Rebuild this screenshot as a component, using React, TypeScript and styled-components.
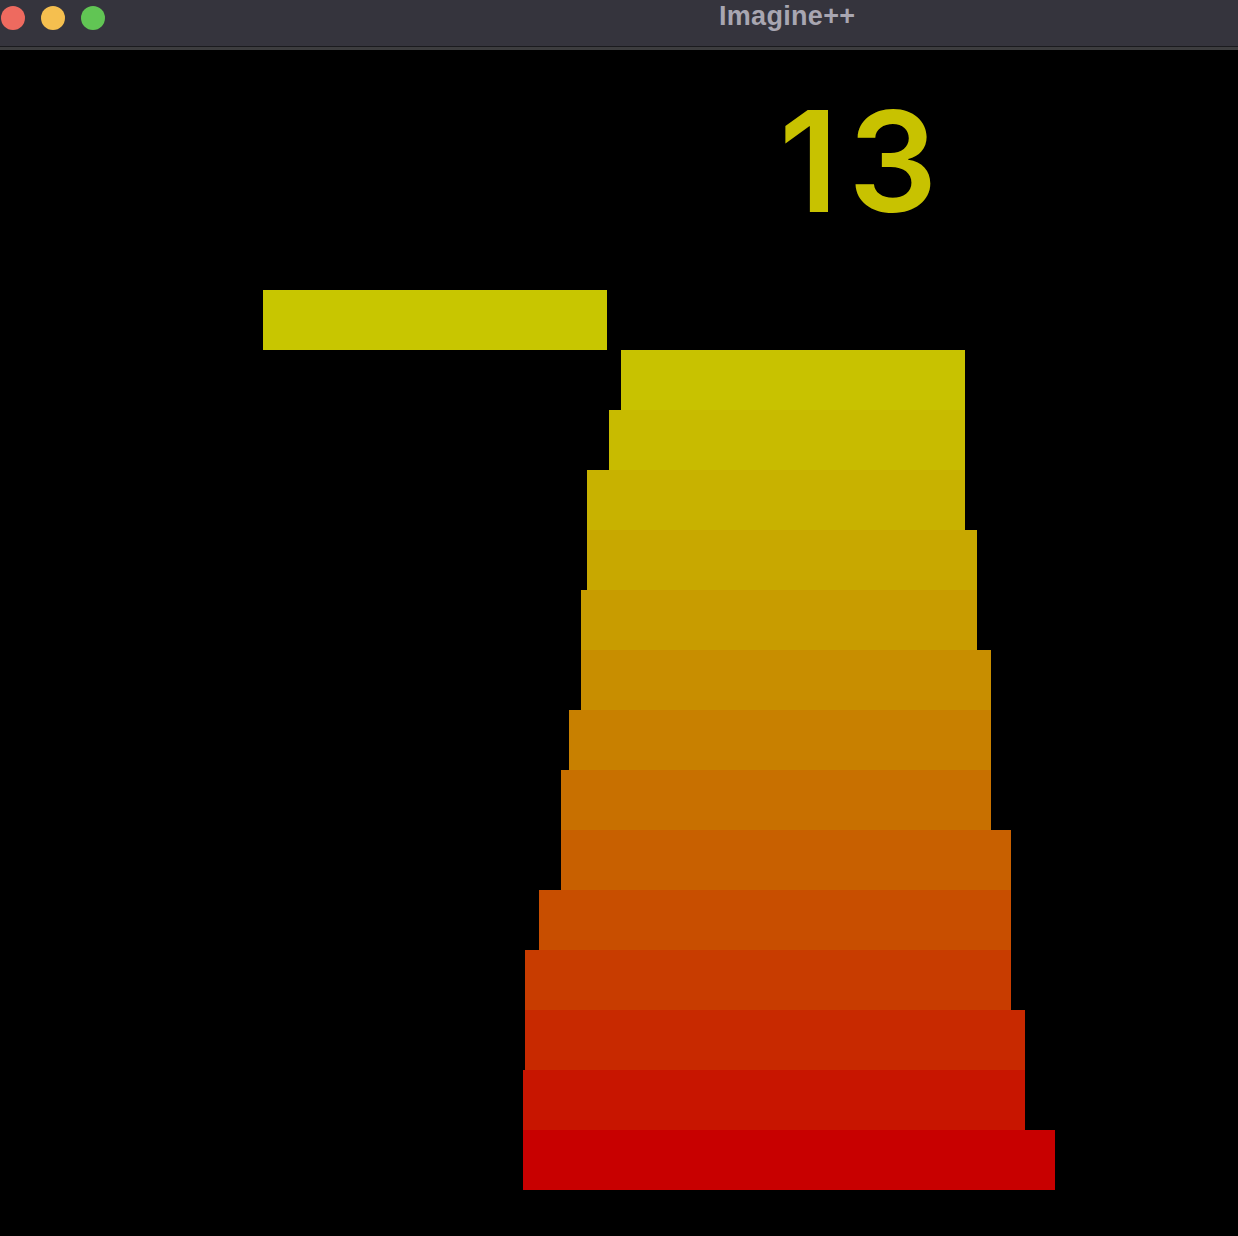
import React from 'react';
import styled, { createGlobalStyle } from 'styled-components';

const GlobalStyle = createGlobalStyle`
  html, body {
    margin: 0;
    padding: 0;
    background: #000000;
  }
  body {
    font-family: 'Liberation Sans', Arial, sans-serif;
  }
`;

// game state, top to bottom: the block still sliding, then the placed levels
const BLOCK_H = 60;
const MOVING = { left: 263, right: 607 };
const STACK: { left: number; right: number }[] = [
  { left: 621, right: 965 },
  { left: 609, right: 965 },
  { left: 587, right: 965 },
  { left: 587, right: 977 },
  { left: 581, right: 977 },
  { left: 581, right: 991 },
  { left: 569, right: 991 },
  { left: 561, right: 991 },
  { left: 561, right: 1011 },
  { left: 539, right: 1011 },
  { left: 525, right: 1011 },
  { left: 525, right: 1025 },
  { left: 523, right: 1025 },
  { left: 523, right: 1055 },
];
const LEVELS = STACK.length;

// red at the base, easing to yellow at the top
function level_color(level: number) {
  const t = Math.min(1, level / LEVELS);
  const g = Math.round(198 * (1 - Math.pow(1 - t, 1.5)));
  return `rgb(200, ${g}, 0)`;
}

const Window = styled.div`
  display: flex;
  flex-direction: column;
  width: 1238px;
  height: 1236px;
  background: #000000;
  overflow: hidden;
`;

const TitleBar = styled.div`
  display: flex;
  align-items: flex-start;
  height: 46px;
  flex-shrink: 0;
  background: #35343d;
  border-bottom: 1px solid #1b1b1f;
  box-shadow: 0 3px 0 #3d3d3f;
  margin-bottom: 3px;
`;

const Lights = styled.div`
  display: flex;
  gap: 16px;
  padding: 6px 0 0 1px;
`;

const Light = styled.span<{ $color: string }>`
  display: block;
  width: 24px;
  height: 24px;
  border-radius: 50%;
  background: ${({ $color }) => $color};
`;

const Title = styled.div`
  margin-left: 614px;
  padding-top: 3px;
  font-family: 'Liberation Sans', Arial, sans-serif;
  font-weight: 700;
  font-size: 27px;
  line-height: 27px;
  letter-spacing: 0.3px;
  color: #a8a6b1;
`;

const Canvas = styled.div`
  display: flex;
  flex-direction: column;
  flex: 1;
  background: #000000;
`;

const Score = styled.div`
  margin: 41px 0 0 779px;
  height: 140px;
  font-family: Inter, 'Liberation Sans', sans-serif;
  font-weight: 600;
  font-size: 140px;
  line-height: 140px;
  letter-spacing: 10px;
  color: #c8c200;
`;

const Tower = styled.div`
  display: flex;
  flex-direction: column;
  margin-top: 59px;
`;

const Block = styled.div<{ $x: number; $w: number; $color: string }>`
  flex-shrink: 0;
  margin-left: ${({ $x }) => $x}px;
  width: ${({ $w }) => $w}px;
  height: ${BLOCK_H}px;
  background: ${({ $color }) => $color};
`;

export default function App() {
  return (
    <>
      <GlobalStyle />
      <Window>
        <TitleBar>
          <Lights>
            <Light $color='#ee6a5f' />
            <Light $color='#f5bf4f' />
            <Light $color='#61c554' />
          </Lights>
          <Title>Imagine++</Title>
        </TitleBar>

        <Canvas>
          <Score>13</Score>

          <Tower>
            <Block $x={MOVING.left} $w={MOVING.right - MOVING.left} $color={level_color(LEVELS)} />
            {STACK.map(({ left, right }, i) => (
              <Block key={i} $x={left} $w={right - left} $color={level_color(LEVELS - 1 - i)} />
            ))}
          </Tower>
        </Canvas>
      </Window>
    </>
  );
}
